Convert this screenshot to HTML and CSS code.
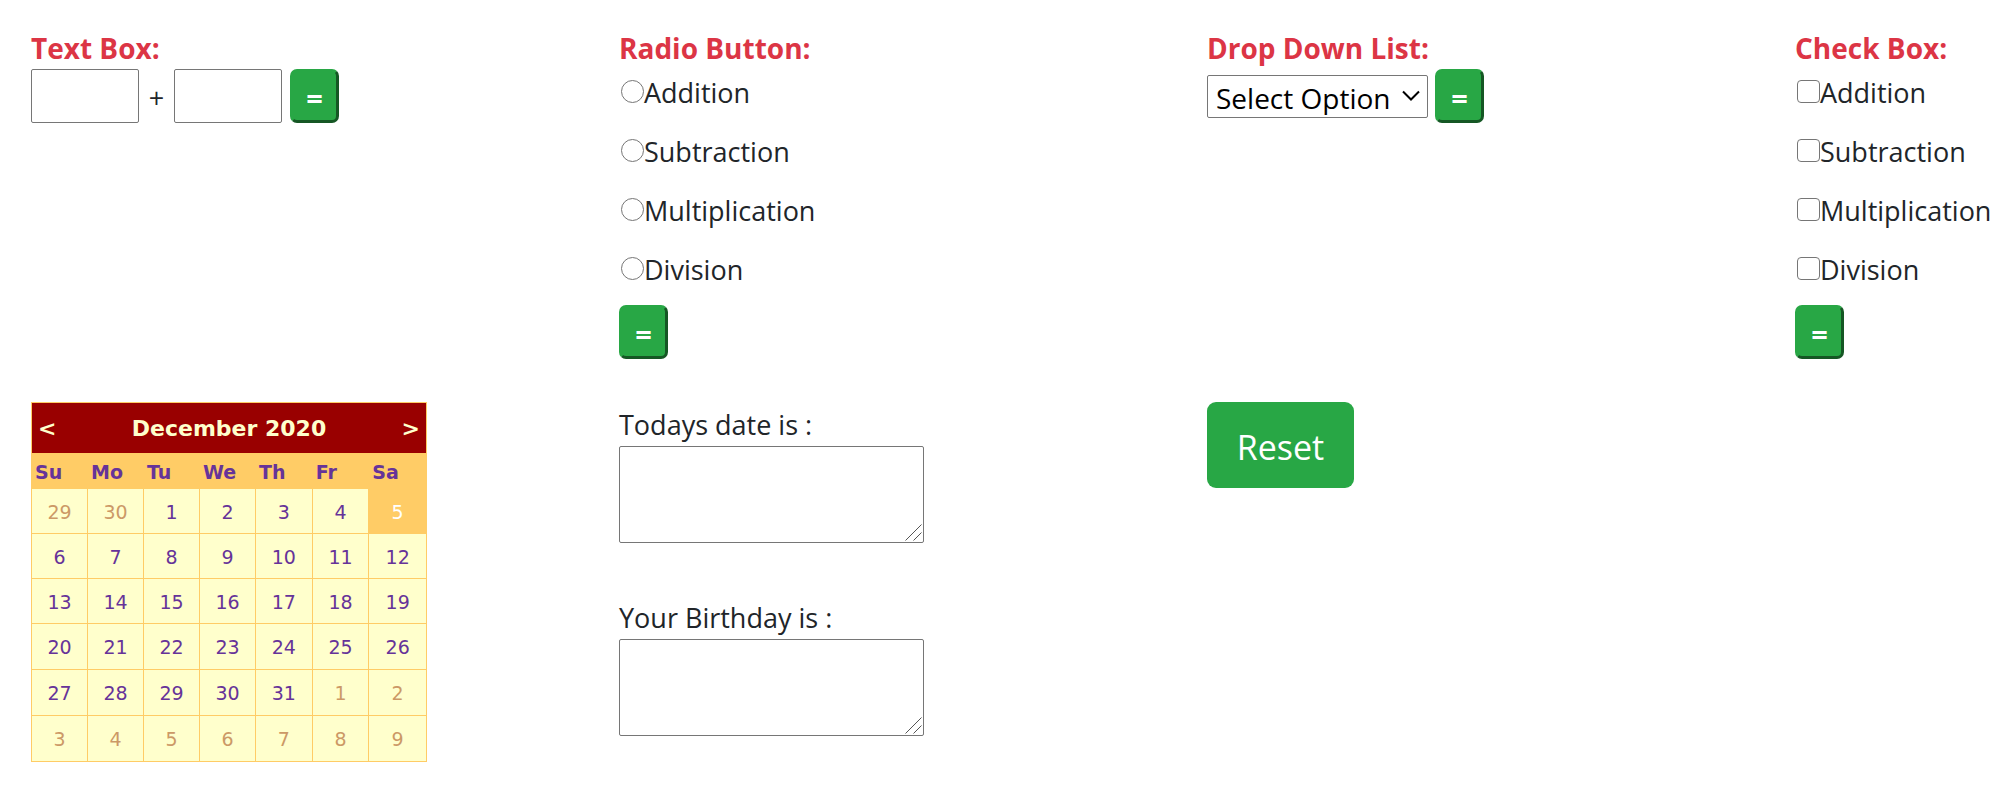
FILE: index.html
```html
<!DOCTYPE html>
<html lang="en">
<head>
<meta charset="utf-8">
<title>Calculator and Calendar</title>
<link rel="stylesheet" href="styles.css">
</head>
<body>
<main class="board">
  <section>
    <h2 class="heading">Text Box:</h2>
    <div class="sum-row">
      <input class="number" type="text" aria-label="First number">
      <span class="plus">+</span>
      <input class="number" type="text" aria-label="Second number">
      <button class="equals" type="button">=</button>
    </div>
  </section>
  <section>
    <h2 class="heading">Radio Button:</h2>
    <div class="options">
      <label class="option"><input class="mark round" type="radio" name="op"><span>Addition</span></label>
      <label class="option"><input class="mark round" type="radio" name="op"><span>Subtraction</span></label>
      <label class="option"><input class="mark round" type="radio" name="op"><span>Multiplication</span></label>
      <label class="option"><input class="mark round" type="radio" name="op"><span>Division</span></label>
    </div>
    <button class="equals" type="button">=</button>
  </section>
  <section>
    <h2 class="heading">Drop Down List:</h2>
    <div class="select-row">
      <div class="select-wrap">
        <select class="select" aria-label="Operation"><option>Select Option</option><option>Addition</option><option>Subtraction</option><option>Multiplication</option><option>Division</option></select>
        <svg class="chevron" viewBox="0 0 18 12" aria-hidden="true"><path d="M1 1.5 9 9.5 17 1.5" fill="none" stroke="#000" stroke-width="2"/></svg>
      </div>
      <button class="equals" type="button">=</button>
    </div>
  </section>
  <section>
    <h2 class="heading">Check Box:</h2>
    <div class="options">
      <label class="option"><input class="mark" type="checkbox"><span>Addition</span></label>
      <label class="option"><input class="mark" type="checkbox"><span>Subtraction</span></label>
      <label class="option"><input class="mark" type="checkbox"><span>Multiplication</span></label>
      <label class="option"><input class="mark" type="checkbox"><span>Division</span></label>
    </div>
    <button class="equals" type="button">=</button>
  </section>

  <section>
    <div class="calendar">
      <div class="month">
        <a class="nav" href="#prev" aria-label="Previous month">&lt;</a>
        <span>December 2020</span>
        <a class="nav" href="#next" aria-label="Next month">&gt;</a>
      </div>
      <table class="days">
        <colgroup><col class="narrow" span="4"><col span="3"></colgroup>
        <thead><tr><th>Su</th><th>Mo</th><th>Tu</th><th>We</th><th>Th</th><th>Fr</th><th>Sa</th></tr></thead>
        <tbody>
          <tr><td class="other">29</td><td class="other">30</td><td>1</td><td>2</td><td>3</td><td>4</td><td class="today">5</td></tr>
          <tr><td>6</td><td>7</td><td>8</td><td>9</td><td>10</td><td>11</td><td>12</td></tr>
          <tr><td>13</td><td>14</td><td>15</td><td>16</td><td>17</td><td>18</td><td>19</td></tr>
          <tr><td>20</td><td>21</td><td>22</td><td>23</td><td>24</td><td>25</td><td>26</td></tr>
          <tr><td>27</td><td>28</td><td>29</td><td>30</td><td>31</td><td class="other">1</td><td class="other">2</td></tr>
          <tr><td class="other">3</td><td class="other">4</td><td class="other">5</td><td class="other">6</td><td class="other">7</td><td class="other">8</td><td class="other">9</td></tr>
        </tbody>
      </table>
    </div>
  </section>
  <section class="dates">
    <div class="field">
      <label for="today">Todays date is :</label>
      <div class="area-wrap">
        <textarea class="area" id="today"></textarea>
        <svg class="grip" viewBox="0 0 17 17" aria-hidden="true"><path d="M.5 16.5 16.5.5M8.5 16.5l8-8" fill="none" stroke="#555"/></svg>
      </div>
    </div>
    <div class="field">
      <label for="birthday">Your Birthday is :</label>
      <div class="area-wrap">
        <textarea class="area" id="birthday"></textarea>
        <svg class="grip" viewBox="0 0 17 17" aria-hidden="true"><path d="M.5 16.5 16.5.5M8.5 16.5l8-8" fill="none" stroke="#555"/></svg>
      </div>
    </div>
  </section>
  <section>
    <button class="reset" type="button">Reset</button>
  </section>
</main>
</body>
</html>
```
FILE: styles.css
```css
* { box-sizing: border-box; }

body {
  margin: 0;
  background: #fff;
  color: #212529;
  font: 27px/45px "Segoe UI", "Open Sans", "Noto Sans", sans-serif;
}

.board {
  display: grid;
  grid-template-columns: repeat(3, 1fr) 212px;
  row-gap: 43px;
  padding: 24px 0 0 31px;
}

.heading {
  margin: 0;
  padding-top: 4px;
  color: #dc3545;
  font-size: 28px;
  font-weight: 700;
  line-height: 41px;
}

.sum-row, .select-row { display: flex; align-items: center; }
.select-row { gap: 7px; }

.number {
  width: 108px;
  height: 54px;
  border: 1px solid #767676;
  border-radius: 2px;
  font: inherit;
}

.plus { width: 35px; padding-top: 3px; text-align: center; }
.sum-row .equals { margin-left: 8px; }

.equals {
  display: block;
  width: 49px;
  height: 54px;
  padding: 4px 0 0;
  border: 3px solid;
  border-color: #28a745 #155724 #155724 #28a745;
  border-radius: 7px;
  background: #28a745;
  color: #fff;
  font: 700 29px/30px "Segoe UI", "Open Sans", sans-serif;
}

.options { display: grid; gap: 14px; padding-bottom: 14px; }
.option { display: flex; align-items: center; }
.option span { padding-top: 2px; line-height: 43px; }

.mark {
  appearance: none;
  width: 23px;
  height: 23px;
  margin: 0 0 0 2px;
  border: 1px solid #767676;
  border-radius: 4px;
  background: #fff;
}
.mark:checked { background: #0075ff; }
.round { border-radius: 50%; }

.select-wrap { position: relative; }
.select {
  display: block;
  appearance: none;
  width: 221px;
  height: 43px;
  padding: 0 8px 2px;
  border: 1px solid #767676;
  border-radius: 2px;
  background: #fff;
  color: #000;
  font: inherit;
  font-size: 28px;
}
.chevron {
  position: absolute;
  top: 15px;
  right: 8px;
  width: 18px;
  height: 12px;
  pointer-events: none;
}

.calendar {
  width: 396px;
  border: 1px solid #fc6;
  border-bottom: 0;
  background: #ffc;
  color: #639;
  font: 19px/24px Verdana, "DejaVu Sans", sans-serif;
}
.month {
  display: flex;
  justify-content: space-between;
  align-items: center;
  height: 50px;
  padding: 2px 6px 0;
  background: #900;
  color: #ffc;
  font-size: 22px;
  font-weight: 700;
}
.nav { color: inherit; text-decoration: none; }

.days {
  width: 100%;
  table-layout: fixed;
  border-collapse: separate;
  border-spacing: 0;
}
.narrow { width: 56px; }
.days th {
  height: 36px;
  padding: 2px 0 0 3px;
  background: #fc6;
  font-size: 19px;
  text-align: left;
}
.days td {
  height: 45px;
  padding: 1px 0 0;
  border-right: 1px solid #fc6;
  border-bottom: 1px solid #fc6;
  text-align: center;
}
.days td:last-child { border-right: 0; }
.days tr:nth-last-child(-n+3) td { height: 46px; }
.days .other { color: #c96; }
.days .today { background: #fc6; color: #fff; }

.dates { display: grid; gap: 52px; align-content: start; }
.field { display: grid; justify-items: start; }
.field label { padding-top: 2px; line-height: 42px; }
.area-wrap { position: relative; }
.area {
  display: block;
  width: 305px;
  height: 97px;
  border: 1px solid #767676;
  border-radius: 2px;
  font: inherit;
  resize: none;
}
.grip {
  position: absolute;
  right: 2px;
  bottom: 2px;
  width: 17px;
  height: 17px;
  pointer-events: none;
}

.reset {
  display: block;
  width: 147px;
  height: 86px;
  padding: 4px 0 0;
  border: 0;
  border-radius: 9px;
  background: #28a745;
  color: #fff;
  font: 400 34px/56px "Segoe UI", "Open Sans", sans-serif;
}
```
